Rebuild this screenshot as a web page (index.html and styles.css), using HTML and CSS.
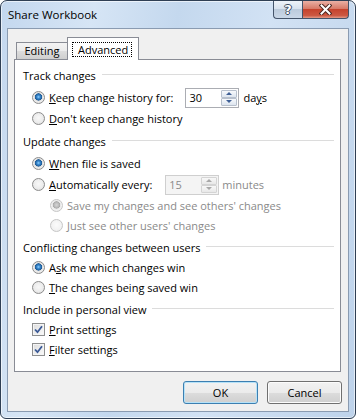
FILE: index.html
```html
<!DOCTYPE html>
<html lang="en">
<head>
<meta charset="utf-8">
<title>Share Workbook</title>
<link rel="stylesheet" href="styles.css">
</head>
<body>
<div class="window">
  <header class="titlebar">
    <span class="title">Share Workbook</span>
    <div class="caption">
      <div class="cap-btn cap-help"><span class="q">?</span></div>
      <div class="cap-btn cap-close">
        <svg width="13" height="11" viewBox="0 0 13 11" aria-hidden="true">
          <path class="x-out" d="M2.5 1.5 L10.5 9.5 M10.5 1.5 L2.5 9.5"/>
          <path class="x-in" d="M2.5 1.5 L10.5 9.5 M10.5 1.5 L2.5 9.5"/>
        </svg>
      </div>
    </div>
  </header>
  <div class="client">
    <div class="tabs">
      <div class="tab">Editing</div>
      <div class="tab active"><span class="focus">Advanced</span></div>
    </div>
    <div class="panel">
      <section class="group">
        <div class="group-head">Track changes</div>
        <div class="row">
          <span class="radio on"></span><span class="label"><u>K</u>eep change history for:</span>
          <div class="spin spin-days"><span class="spin-val">30</span><span class="spin-btns"><span class="up"></span><span class="down"></span></span></div>
          <span class="unit">da<u>y</u>s</span>
        </div>
        <div class="row"><span class="radio"></span><span class="label"><u>D</u>on't keep change history</span></div>
      </section>
      <section class="group">
        <div class="group-head">Update changes</div>
        <div class="row"><span class="radio on"></span><span class="label"><u>W</u>hen file is saved</span></div>
        <div class="row">
          <span class="radio"></span><span class="label"><u>A</u>utomatically every:</span>
          <div class="spin spin-min disabled"><span class="spin-val">15</span><span class="spin-btns"><span class="up"></span><span class="down"></span></span></div>
          <span class="unit disabled">minutes</span>
        </div>
        <div class="row sub disabled"><span class="radio on"></span><span class="label">Save my changes and see others' changes</span></div>
        <div class="row sub disabled"><span class="radio"></span><span class="label">Just see other users' changes</span></div>
      </section>
      <section class="group compact">
        <div class="group-head">Conflicting changes between users</div>
        <div class="row"><span class="radio on"></span><span class="label">A<u>s</u>k me which changes win</span></div>
        <div class="row"><span class="radio"></span><span class="label"><u>T</u>he changes being saved win</span></div>
      </section>
      <section class="group compact">
        <div class="group-head">Include in personal view</div>
        <div class="row"><span class="check on"><svg width="11" height="11" viewBox="0 0 11 11" aria-hidden="true"><path d="M2 5.5 L4.5 8.2 L9 2.2"/></svg></span><span class="label"><u>P</u>rint settings</span></div>
        <div class="row"><span class="check on"><svg width="11" height="11" viewBox="0 0 11 11" aria-hidden="true"><path d="M2 5.5 L4.5 8.2 L9 2.2"/></svg></span><span class="label"><u>F</u>ilter settings</span></div>
      </section>
    </div>
    <div class="buttons">
      <button class="btn default">OK</button>
      <button class="btn">Cancel</button>
    </div>
  </div>
</div>
</body>
</html>
```

FILE: styles.css
```css
* { box-sizing: border-box; }
html, body { margin: 0; padding: 0; background: #fff; }
body {
  font-family: "Open Sans", "Noto Sans", "DejaVu Sans", sans-serif;
  font-size: 11px;
  color: #000;
}

/* window frame */
.window {
  width: 356px;
  height: 419px;
  display: flex;
  flex-direction: column;
  padding: 0 6px 6px;
  border: 1px solid #2f3f54;
  border-radius: 7px 7px 6px 6px;
  background: linear-gradient(100deg, #c3d7ee 0%, #d6e5f5 22%, #c4d8ee 42%, #d2e2f4 64%, #bed3eb 100%);
  box-shadow: inset 0 0 0 1px rgba(255, 255, 255, .6);
  overflow: hidden;
}
.titlebar {
  flex: none;
  height: 27px;
  display: flex;
  justify-content: space-between;
  align-items: flex-start;
}
.title {
  padding-left: 1px;
  line-height: 27px;
  font-size: 11.5px;
}
.caption { display: flex; }
.cap-btn {
  height: 18px;
  display: flex;
  align-items: center;
  justify-content: center;
  border: 1px solid #44546a;
  border-top: none;
}
.cap-help {
  width: 29px;
  border-right: none;
  border-radius: 0 0 0 4px;
  background: linear-gradient(#eef3f9, #d8e2ee 45%, #bccbdc 50%, #cad8e8);
}
.cap-close {
  width: 47px;
  border-radius: 0 0 4px 0;
  background: linear-gradient(#eab0a4, #d77a68 45%, #c6432d 50%, #cc5842 85%, #e39a88);
}
.q {
  font: bold 13px/1 "DejaVu Sans", sans-serif;
  color: #fff;
  text-shadow: -1px 0 #3a4a5e, 1px 0 #3a4a5e, 0 -1px #3a4a5e, 0 1px #3a4a5e;
}
.x-out { stroke: #4b2620; stroke-width: 4; stroke-linecap: square; fill: none; }
.x-in { stroke: #fff; stroke-width: 2; stroke-linecap: square; fill: none; }

/* client area */
.client {
  flex: 1;
  display: flex;
  flex-direction: column;
  border: 1px solid #8a9bb1;
  background: #f0f0f0;
  padding: 8px 7px 7px 6px;
}

/* tabs */
.tabs {
  flex: none;
  height: 22px;
  display: flex;
  align-items: flex-end;
  padding-left: 2px;
  position: relative;
  z-index: 1;
}
.tab {
  height: 17px;
  width: 52px;
  border: 1px solid #898c95;
  border-bottom: none;
  background: linear-gradient(#f3f3f3, #ebebeb 50%, #dddddd 50%, #cfcfcf);
  text-align: center;
  line-height: 15px;
}
.tab.active {
  width: 72px;
  height: 23px;
  margin-left: -1px;
  margin-bottom: -1px;
  background: #fff;
  text-align: left;
  padding: 4px 0 0 4px;
  line-height: 13px;
}
.focus {
  display: inline-block;
  height: 15px;
  padding: 0 3px 0 5px;
  border: 1px dotted #000;
}

/* panel */
.panel {
  flex: none;
  height: 313px;
  background: #fff;
  border: 1px solid #898c95;
  padding: 5px 6px 0 8px;
}
.group + .group { margin-top: 2px; }
.group-head {
  height: 20px;
  display: flex;
  align-items: center;
  margin-bottom: 2px;
}
.group-head::after {
  content: "";
  flex: 1;
  height: 1px;
  margin: -1px 0 0 6px;
  background: #dcdcdc;
}
.compact .group-head { margin-bottom: 0; }

.row {
  height: 21px;
  display: flex;
  align-items: center;
  padding-left: 9px;
}
.row.sub { height: 20px; padding-left: 27px; }
.compact .row { height: 20px; }
.disabled { color: #8a8a8a; }

/* radio */
.radio {
  flex: none;
  width: 13px;
  height: 13px;
  margin-right: 4px;
  border-radius: 50%;
  border: 1px solid #8c8c8c;
  background: radial-gradient(circle at 50% 45%, #f8f8f8 0, #ececec 55%, #d4d4d4 100%);
}
.radio.on {
  background: radial-gradient(circle at 50% 45%, #8fd1ff 0, #3b8ad0 1.6px, #1c5a96 3.4px, #d8d8d8 3.8px, #eeeeee 5px, #d4d4d4 100%);
}
.row.disabled .radio {
  border-color: #c6c6c6;
  background: radial-gradient(circle at 50% 45%, #fbfbfb 0, #f2f2f2 60%, #e6e6e6 100%);
}
.row.disabled .radio.on {
  background: radial-gradient(circle at 50% 45%, #d6d6d6 0, #b8b8b8 2.6px, #a8a8a8 3.4px, #e4e4e4 3.8px, #f2f2f2 5px, #e4e4e4 100%);
}

/* checkbox */
.check {
  flex: none;
  width: 13px;
  height: 13px;
  margin-right: 4px;
  border: 1px solid #8e8f8f;
  background: linear-gradient(135deg, #dcdcdc, #fbfbfb);
  box-shadow: inset 0 0 0 1px #f4f4f4;
  display: flex;
}
.check svg path {
  fill: none;
  stroke: #3b5a96;
  stroke-width: 1.8;
}

/* spin boxes */
.spin {
  flex: none;
  display: flex;
  width: 54px;
  height: 20px;
  margin: 0 4px 0 12px;
  padding: 1px;
  border: 1px solid #abadb3;
  background: #fff;
}
.spin-min { margin-left: 13px; margin-right: 3px; }
.spin-val {
  flex: 1;
  padding-left: 2px;
  line-height: 16px;
}
.spin-btns {
  width: 16px;
  display: flex;
  flex-direction: column;
}
.spin-btns span {
  flex: 1;
  display: flex;
  align-items: center;
  justify-content: center;
  border: 1px solid #b7c0cd;
  border-radius: 1px;
  background: linear-gradient(#f7f9fc, #dde5ef);
}
.spin-btns .up::before,
.spin-btns .down::before {
  content: "";
  border-left: 3px solid transparent;
  border-right: 3px solid transparent;
}
.spin-btns .up::before { border-bottom: 3px solid #3e5f96; }
.spin-btns .down::before { border-top: 3px solid #3e5f96; }
.spin.disabled { border-color: #cfcfcf; background: #f4f4f4; }
.spin.disabled .spin-btns span { border-color: #d4d4d4; background: linear-gradient(#f8f8f8, #e8e8e8); }
.spin.disabled .up::before { border-bottom-color: #a8a8a8; }
.spin.disabled .down::before { border-top-color: #a8a8a8; }

/* buttons */
.buttons {
  flex: none;
  display: flex;
  justify-content: flex-end;
  gap: 9px;
  margin: 9px -1px 0 0;
}
.btn {
  width: 75px;
  height: 23px;
  padding: 0;
  font: inherit;
  color: #000;
  border: 1px solid #707070;
  border-radius: 3px;
  background: linear-gradient(#f2f2f2, #ebebeb 50%, #dddddd 50%, #cfcfcf);
  box-shadow: inset 0 0 0 1px #fcfcfc;
}
.btn.default {
  border-color: #3c7fb1;
  box-shadow: inset 0 0 0 1px #b6e2f8;
}
```
